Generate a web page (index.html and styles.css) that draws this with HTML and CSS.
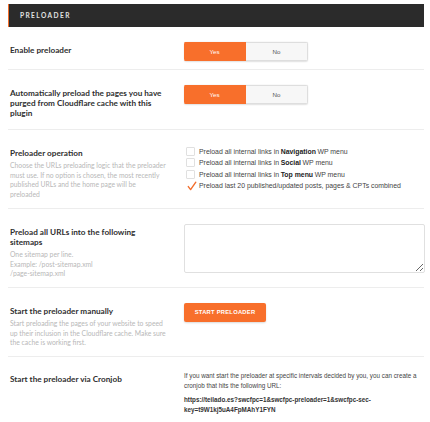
FILE: index.html
```html
<!DOCTYPE html>
<html>
<head>
<meta charset="utf-8">
<link rel="stylesheet" href="styles.css">
</head>
<body>
<div class="panel">
  <div class="header">PRELOADER</div>

  <div class="row">
    <div class="left"><div class="title">Enable preloader</div></div>
    <div class="right">
      <div class="toggle"><span class="opt on">Yes</span><span class="opt">No</span></div>
    </div>
  </div>

  <div class="row">
    <div class="left"><div class="title">Automatically preload the pages you have purged from Cloudflare cache with this plugin</div></div>
    <div class="right">
      <div class="toggle"><span class="opt on">Yes</span><span class="opt">No</span></div>
    </div>
  </div>

  <div class="row">
    <div class="left">
      <div class="title">Preloader operation</div>
      <div class="desc">Choose the URLs preloading logic that the preloader must use. If no option is chosen, the most recently published URLs and the home page will be preloaded</div>
    </div>
    <div class="right">
      <ul class="checks">
        <li><span class="box"></span>Preload all internal links in <b>Navigation</b> WP menu</li>
        <li><span class="box"></span>Preload all internal links in <b>Social</b> WP menu</li>
        <li><span class="box"></span>Preload all internal links in <b>Top menu</b> WP menu</li>
        <li><span class="box checked"><svg viewBox="0 0 10 10" width="10" height="10"><path d="M1.3 5.6 L3.6 8.6 L8.8 1.2" fill="none" stroke="#f26d2b" stroke-width="1.4" stroke-linecap="round" stroke-linejoin="round"/></svg></span>Preload last 20 published/updated posts, pages &amp; CPTs combined</li>
      </ul>
    </div>
  </div>

  <div class="row">
    <div class="left">
      <div class="title">Preload all URLs into the following sitemaps</div>
      <div class="desc">One sitemap per line.<br>Example: /post-sitemap.xml<br>/page-sitemap.xml</div>
    </div>
    <div class="right">
      <textarea class="area"></textarea>
    </div>
  </div>

  <div class="row">
    <div class="left">
      <div class="title">Start the preloader manually</div>
      <div class="desc">Start preloading the pages of your website to speed up their inclusion in the Cloudflare cache. Make sure the cache is working first.</div>
    </div>
    <div class="right">
      <button class="btn">START PRELOADER</button>
    </div>
  </div>

  <div class="row last">
    <div class="left"><div class="title">Start the preloader via Cronjob</div></div>
    <div class="right">
      <p class="info">If you want start the preloader at specific intervals decided by you, you can create a cronjob that hits the following URL:</p>
      <p class="info url">https://teilado.es?swcfpc=1&amp;swcfpc-preloader=1&amp;swcfpc-sec-key=t9W1kj5uA4FpMAhY1FYN</p>
    </div>
  </div>
</div>
</body>
</html>
```
FILE: styles.css
```css
html, body {
  margin: 0;
  padding: 0;
  background: #ffffff;
}
body {
  padding: 4px 6px 0 8px;
}
.panel {
  width: 416px;
}
.header {
  height: 23px;
  background: #2b2b2b;
  border-left: 1px solid #f26d2b;
  color: #e2e2e2;
  font-family: "Lato", sans-serif;
  font-weight: 700;
  font-size: 6.6px;
  letter-spacing: 1.4px;
  line-height: 23px;
  padding-left: 11px;
}
.row {
  display: flex;
  padding: 15px 0 8px;
  border-bottom: 1px solid #ededed;
}
.row.last {
  border-bottom: none;
  padding-top: 14px;
}
.left {
  width: 176px;
  flex: none;
  padding-left: 2px;
  padding-right: 17px;
  box-sizing: border-box;
}
.right {
  flex: 1;
  min-width: 0;
}
.title {
  font-family: "Lato", sans-serif;
  font-weight: 700;
  font-size: 8.2px;
  line-height: 10px;
  color: #2f2f2f;
  padding-top: 3px;
  margin-bottom: 3px;
}
.desc {
  font-family: "Lato", sans-serif;
  font-weight: 400;
  font-size: 6.8px;
  line-height: 9.7px;
  color: #b8b8b8;
}
.toggle {
  display: flex;
  width: 124px;
  height: 19px;
  border-radius: 2px;
  overflow: hidden;
  box-shadow: 0 0.5px 1.5px rgba(0,0,0,0.12);
}
.opt {
  flex: 1;
  display: flex;
  align-items: center;
  justify-content: center;
  font-family: "Liberation Sans", Arial, sans-serif;
  font-size: 6.2px;
  color: #555555;
  background: #f7f7f7;
  border: 1px solid #dedede;
  border-left: none;
}
.opt.on {
  background: #f86f2b;
  color: #ffffff;
  border-color: #f86f2b;
}
.checks {
  list-style: none;
  margin: 0;
  padding: 1px 0 0 2px;
}
.checks li {
  display: flex;
  align-items: center;
  height: 11.3px;
  font-family: "Liberation Sans", Arial, sans-serif;
  font-size: 6.9px;
  color: #444444;
}
.checks b {
  font-weight: 700;
  color: #222;
  margin: 0 1.6px;
}
.box {
  width: 9px;
  height: 9px;
  border: 1px solid #e0e0e0;
  border-radius: 1px;
  box-sizing: border-box;
  margin-right: 4px;
  flex: none;
  position: relative;
  background: #fff;
}
.box.checked {
  border-color: transparent;
}
.box svg {
  position: absolute;
  left: 0;
  top: -1px;
}
.area {
  display: block;
  width: 241px;
  height: 49px;
  box-sizing: border-box;
  border: 1px solid #e0e0e0;
  border-radius: 2px;
  margin: 0;
  padding: 2px;
  resize: vertical;
  background: #fff;
}
.btn {
  display: block;
  width: 82px;
  height: 19px;
  margin: 0;
  padding: 0;
  border: none;
  border-radius: 2px;
  background: #f86f2b;
  color: #ffffff;
  font-family: "Liberation Sans", Arial, sans-serif;
  font-weight: 700;
  font-size: 5.8px;
  letter-spacing: 0.25px;
  box-shadow: 0 1px 2px rgba(0,0,0,0.15);
}
.info {
  margin: 0 0 5px;
  font-family: "Liberation Sans", Arial, sans-serif;
  font-size: 6.3px;
  line-height: 9.5px;
  color: #444444;
}
.info.url {
  font-weight: 700;
  color: #333;
}
```
